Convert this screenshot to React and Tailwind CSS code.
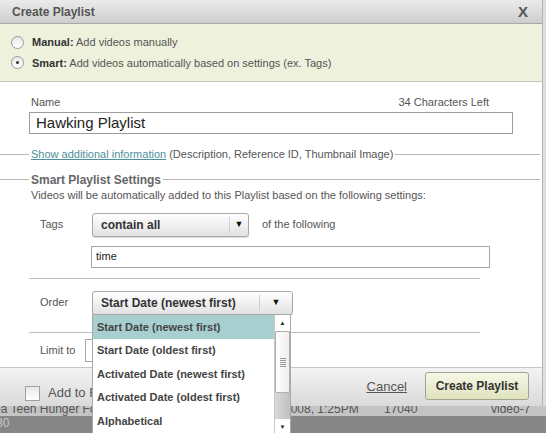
import { useState } from "react";

const font = "font-['Liberation_Sans',Arial,sans-serif]";

const orderOptions = [
  "Start Date (newest first)",
  "Start Date (oldest first)",
  "Activated Date (newest first)",
  "Activated Date (oldest first)",
  "Alphabetical",
];

function Radio({ checked }) {
  return (
    <span className="w-[13px] h-[13px] rounded-full border border-[#9a9a9a] bg-gradient-to-b from-[#e8e8e8] to-white flex items-center justify-center shrink-0">
      {checked && <span className="w-[3px] h-[3px] rounded-full bg-[#333]" />}
    </span>
  );
}

function Select({ value, width, arrowLeft }) {
  return (
    <div
      className={`${width} h-[24px] rounded-[3px] border border-[#a8a8a8] bg-gradient-to-b from-white to-[#e2e2e2] shadow-[0_1px_1px_rgba(0,0,0,0.15)] flex items-center`}
    >
      <span className="flex-1 pl-[8px] text-[12px] font-bold text-[#333]">{value}</span>
      <span className="w-px h-[16px] bg-[#d0d0d0]" />
      <span className={`${arrowLeft} flex justify-center text-[9px] text-[#111]`}>▼</span>
    </div>
  );
}

function Legend({ children, leftLine = "w-[29px]" }) {
  return (
    <div className="flex items-center">
      <span className={`${leftLine} h-px bg-[#b8b8b8]`} />
      <div className="px-[2px] whitespace-nowrap">{children}</div>
      <span className="flex-1 h-px bg-[#b8b8b8] mr-[2px]" />
    </div>
  );
}

export default function App() {
  const [selected] = useState(0);

  return (
    <div className={`w-[546px] h-[433px] overflow-hidden bg-[#dedede] ${font}`}>
      <div className="w-[543px] bg-white border-r border-[#b5b5b5] relative">
        {/* title */}
        <div className="h-[24px] bg-gradient-to-b from-[#ebebeb] to-[#cdcdcd] border-b border-[#a9a9a9] flex items-center justify-between pl-[12px] pr-[14px]">
          <span className="text-[12px] font-bold text-[#555]">Create Playlist</span>
          <span className="text-[15px] font-bold text-[#555] leading-none">X</span>
        </div>

        {/* type */}
        <div className="h-[58px] bg-[#eef1dc] border-b border-[#c3c3c3] flex flex-col justify-center gap-[4px] pl-[11px] text-[11px] text-[#555]">
          <div className="flex items-center gap-[8px]">
            <Radio />
            <span>
              <b className="text-[#333]">Manual:</b> Add videos manually
            </span>
          </div>
          <div className="flex items-center gap-[8px]">
            <Radio checked />
            <span>
              <b className="text-[#333]">Smart:</b> Add videos automatically based on settings (ex. Tags)
            </span>
          </div>
        </div>

        {/* body */}
        <div className="pt-[14px] text-[11px] text-[#555]">
          <div className="flex justify-between pl-[31px] pr-[53px] leading-[13px]">
            <span>Name</span>
            <span>34 Characters Left</span>
          </div>
          <div className="ml-[29px] mt-[3px] w-[484px] h-[22px] border border-[#9c9c9c] flex items-center px-[6px] text-[15px] text-[#222]">
            Hawking Playlist
          </div>

          <div className="mt-[12px]">
            <Legend>
              <span className="text-[#4d8f9c] underline">Show additional information</span>
              <span> (Description, Reference ID, Thumbnail Image)</span>
            </Legend>
          </div>

          <div className="mt-[8px]">
            <Legend>
              <span className="text-[12px] font-bold text-[#666]">Smart Playlist Settings</span>
            </Legend>
          </div>
          <div className="pl-[31px] leading-[13px]">
            Videos will be automatically added to this Playlist based on the following settings:
          </div>

          <div className="flex items-center mt-[11px]">
            <span className="pl-[40px] w-[92px]">Tags</span>
            <Select value="contain all" width="w-[157px]" arrowLeft="w-[18px]" />
            <span className="ml-[13px]">of the following</span>
          </div>
          <div className="ml-[91px] mt-[9px] w-[399px] h-[22px] border border-[#a6a6a6] flex items-center px-[4px] text-[#222]">
            time
          </div>

          <div className="ml-[29px] w-[451px] h-px bg-[#bdbdbd] mt-[10px]" />

          <div className="flex items-center mt-[12px]">
            <span className="pl-[40px] w-[92px]">Order</span>
            <Select value="Start Date (newest first)" width="w-[201px]" arrowLeft="w-[32px]" />
          </div>

          <div className="ml-[29px] w-[451px] h-px bg-[#bdbdbd] mt-[17px]" />

          <div className="flex items-center mt-[6px] h-[23px]">
            <span className="pl-[40px] w-[85px]">Limit to</span>
            <div className="w-[80px] h-[23px] border border-[#a6a6a6]" />
          </div>
        </div>

        {/* footer */}
        <div className="mt-[5px] h-[39px] border-t border-[#c6c6c6] bg-gradient-to-b from-[#f3f3f3] to-[#dadada] flex items-center pl-[25px] pr-[13px]">
          <span className="w-[15px] h-[15px] border border-[#a0a0a0] bg-gradient-to-b from-[#e9e9e9] to-white mt-[13px]" />
          <span className="ml-[8px] text-[13px] text-[#555] mt-[13px] whitespace-nowrap">Add to Favorites</span>
          <span className="ml-auto text-[13px] text-[#555] underline">Cancel</span>
          <button className="ml-[18px] w-[104px] h-[28px] rounded-[3px] border border-[#a2a391] bg-gradient-to-b from-[#f6f8e6] to-[#dfe3bd] text-[12px] font-bold text-[#333] whitespace-nowrap -mt-[1px]">
            Create Playlist
          </button>
        </div>

        {/* order dropdown */}
        <div className="absolute left-[92px] top-[314px] w-[199px] h-[130px] bg-white border border-[#a8a8a8] flex">
          <div className="flex-1">
            {orderOptions.map((o, i) => (
              <div
                key={o}
                className={`h-[23.6px] flex items-center pl-[4px] text-[11px] font-bold ${
                  i === selected ? "bg-[#a8cfd0] text-[#444]" : "text-[#444]"
                }`}
              >
                {o}
              </div>
            ))}
          </div>
          <div className="w-[16px] flex flex-col bg-gradient-to-r from-[#d8d8d8] to-[#c0c0c0] border-l border-[#c8c8c8]">
            <div className="h-[16px] bg-white flex items-center justify-center text-[6px] text-[#222]">▲</div>
            <div className="h-[62px] bg-gradient-to-r from-white to-[#eeeeee] border border-[#b0b0b0] rounded-[2px] flex flex-col items-center justify-center gap-[1px]">
              <span className="w-[6px] h-px bg-[#999]" />
              <span className="w-[6px] h-px bg-[#999]" />
              <span className="w-[6px] h-px bg-[#999]" />
              <span className="w-[6px] h-px bg-[#999]" />
              <span className="w-[6px] h-px bg-[#999]" />
            </div>
            <div className="h-[26px]" />
            <div className="h-[16px] bg-white flex items-center justify-center text-[6px] text-[#222]">▼</div>
          </div>
        </div>
      </div>

      {/* page behind */}
      <div className="h-[10px] bg-[#c4c4c4] overflow-hidden text-[12px] text-[#555] leading-[14px]">
        <div className="flex -mt-[4px]">
          <span className="w-[290px] -ml-[6px]">ea Teen Hunger For</span>
          <span className="w-[100px]">2008, 1:25PM</span>
          <span className="w-[107px]">17040</span>
          <span>video-7</span>
        </div>
      </div>
      <div className="h-[20px] bg-[#868686] text-[12px] text-[#c8c8c8] leading-[14px] -ml-[4px]">30</div>
    </div>
  );
}
